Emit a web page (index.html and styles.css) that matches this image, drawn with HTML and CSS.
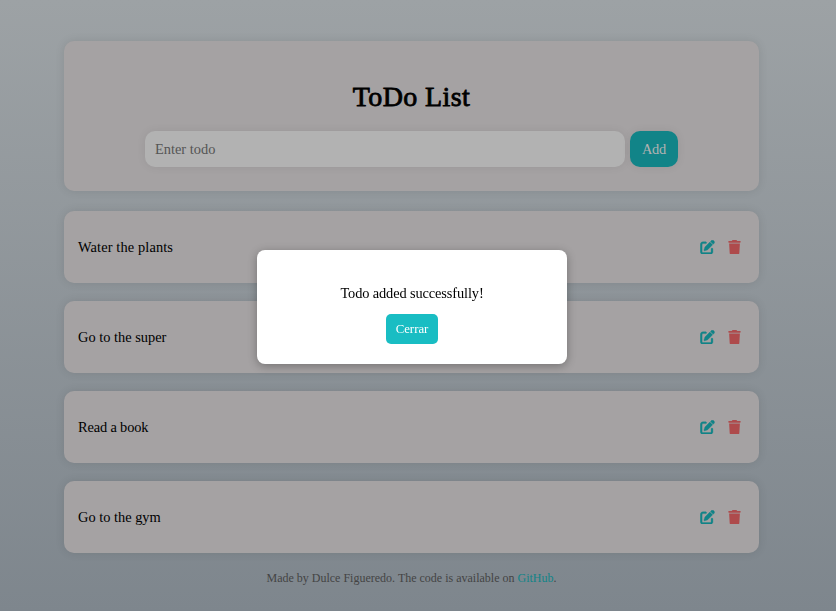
FILE: index.html
```html
<!DOCTYPE html>
<html lang="en">
<head>
<meta charset="utf-8">
<title>ToDo List</title>
<link rel="stylesheet" href="styles.css">
</head>
<body>
<svg class="sprite" aria-hidden="true">
  <symbol id="edit" viewBox="0 0 512 512"><path d="M471.6 21.7c-21.9-21.9-57.3-21.9-79.2 0L362.3 51.7l97.900 97.900 30.100-30.100c21.900-21.900 21.900-57.300 0-79.200L471.600 21.700zm-299.200 220c-6.100 6.100-10.800 13.600-13.500 21.900l-29.600 88.800c-2.900 8.600-.6 18.100 5.800 24.600s15.900 8.700 24.600 5.800l88.800-29.600c8.200-2.700 15.700-7.400 21.900-13.500L437.700 172.300 339.700 74.300 172.400 241.700zM96 64C43 64 0 107 0 160V416c0 53 43 96 96 96H352c53 0 96-43 96-96V320c0-17.700-14.300-32-32-32s-32 14.300-32 32v96c0 17.700-14.300 32-32 32H96c-17.700 0-32-14.300-32-32V160c0-17.700 14.300-32 32-32h96c17.700 0 32-14.300 32-32s-14.300-32-32-32H96z"/></symbol>
  <symbol id="trash" viewBox="0 0 448 512"><path d="M135.2 17.7L128 32H32C14.3 32 0 46.3 0 64S14.3 96 32 96H416c17.700 0 32-14.300 32-32s-14.300-32-32-32H320l-7.200-14.300C307.400 6.800 296.300 0 284.200 0H163.800c-12.100 0-23.200 6.800-28.600 17.700zM416 128H32L53.200 467c1.600 25.300 22.600 45 47.900 45H346.900c25.300 0 46.300-19.700 47.900-45L416 128z"/></symbol>
</svg>
<main class="container">
  <header class="card header">
    <h1>ToDo List</h1>
    <form class="form">
      <input class="field" type="text" placeholder="Enter todo">
      <button class="add" type="button">Add</button>
    </form>
  </header>
  <ul class="list">
    <li class="card item"><span class="water">Water the plants</span><svg class="edit"><use href="#edit"/></svg><svg class="trash"><use href="#trash"/></svg></li>
    <li class="card item"><span>Go to the super</span><svg class="edit"><use href="#edit"/></svg><svg class="trash"><use href="#trash"/></svg></li>
    <li class="card item"><span class="read">Read a book</span><svg class="edit"><use href="#edit"/></svg><svg class="trash"><use href="#trash"/></svg></li>
    <li class="card item"><span>Go to the gym</span><svg class="edit"><use href="#edit"/></svg><svg class="trash"><use href="#trash"/></svg></li>
  </ul>
  <footer class="footer">Made by Dulce Figueredo. The code is available on <a href="#">GitHub</a>.</footer>
</main>
<div class="overlay">
  <div class="modal">
    <p>Todo added successfully!</p>
    <button class="close" type="button">Cerrar</button>
  </div>
</div>
</body>
</html>
```

FILE: styles.css
```css
* { box-sizing: border-box; }
body {
  margin: 0;
  height: 611px;
  overflow: hidden;
  font-family: "Source Serif Pro", "Liberation Serif", serif;
  font-size: 14.4px;
  color: #000;
  background: linear-gradient(#9da2a5, #7e868d);
}
.sprite { display: none; }
.container { width: 695px; margin-left: 64px; padding-top: 41px; }
.card {
  background: #a5a2a3;
  border-radius: 10px;
  box-shadow: 0 0 10px rgba(0, 0, 0, 0.1);
}
.header { height: 150px; padding-top: 37px; }
h1 {
  margin: 0;
  height: 36px;
  line-height: 37px;
  font-size: 28px;
  font-weight: 400;
  letter-spacing: 0.4px;
  -webkit-text-stroke: 0.8px #000;
  text-align: center;
}
.form { display: flex; gap: 5px; margin: 17px 0 0 81px; }
.field {
  width: 480px;
  height: 36px;
  padding: 0 10px;
  border: 0;
  border-radius: 10px;
  background: #b2b2b2;
  font: inherit;
  box-shadow: 0 0 10px rgba(0, 0, 0, 0.07);
}
.field::placeholder { color: #555; opacity: 1; }
.add {
  width: 48px;
  height: 36px;
  padding: 0;
  border: 0;
  border-radius: 10px;
  background: #118488;
  color: #b2b2b2;
  font: inherit;
  letter-spacing: -0.2px;
  box-shadow: 0 0 10px rgba(0, 0, 0, 0.07);
}
.list { list-style: none; margin: 20px 0 0; padding: 0; display: grid; gap: 18px; }
.item { display: flex; align-items: center; height: 72px; padding: 0 18px 0 14px; }
.item span { flex: 1; padding-top: 1px; }
.item .water { letter-spacing: 0.12px; }
.item .read { letter-spacing: -0.15px; }
.edit { width: 15px; height: 14.4px; margin-right: 13px; fill: #118488; stroke: #118488; stroke-width: 12px; }
.trash { width: 13px; height: 14.4px; fill: #ae4b4c; }
.footer { margin-top: 16px; text-align: center; font-size: 12px; line-height: 18px; color: #444; }
.footer a { color: #118488; text-decoration: none; }
.overlay { position: fixed; inset: 0 12px 0 0; display: flex; justify-content: center; align-items: center; padding-top: 3px; }
.modal {
  width: 310px;
  height: 114px;
  padding-top: 33px;
  border-radius: 8px;
  background: #fff;
  text-align: center;
  box-shadow: 0 2px 10px rgba(0, 0, 0, 0.3);
}
.modal p { margin: 0 0 11px; line-height: 20px; letter-spacing: -0.12px; }
.close {
  width: 52px;
  height: 30px;
  padding: 0;
  border: 0;
  border-radius: 5px;
  background: #19bdc3;
  color: #fff;
  font: 12.8px "Source Serif Pro", "Liberation Serif", serif;
}
```
